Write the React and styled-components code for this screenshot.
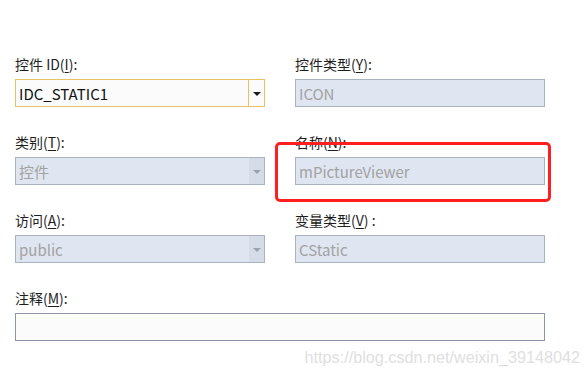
import React from "react";
import styled, { createGlobalStyle } from "styled-components";

const Global = createGlobalStyle`
  html, body { margin: 0; padding: 0; background: #ffffff; }
  body { font-family: "Noto Sans CJK SC", "Noto Sans", sans-serif; }
`;

const Page = styled.div`
  position: relative;
  width: 585px;
  height: 378px;
  box-sizing: border-box;
  padding: 54px 40px 0 15px;
  overflow: hidden;
`;

const Form = styled.div`
  display: grid;
  grid-template-columns: 250px 250px;
  column-gap: 30px;
  row-gap: 25px;
`;

const Field = styled.div`
  display: flex;
  flex-direction: column;
  grid-column: ${(p) => (p.$wide ? "1 / span 2" : "auto")};
`;

const Label = styled.label`
  font-size: 14px;
  line-height: 20px;
  height: 20px;
  margin-bottom: 5px;
  color: #1e1e1e;
  white-space: nowrap;
  u { text-decoration: underline; text-underline-offset: 2px; }
`;

const Box = styled.div`
  box-sizing: border-box;
  height: 28px;
  display: flex;
  align-items: stretch;
  border: 1px solid ${(p) => (p.$active ? "#e6c262" : p.$disabled ? "#a9b2bf" : "#8a94a6")};
  background: ${(p) => (p.$disabled ? "#dfe6f1" : "#fbfbfb")};
`;

const Value = styled.div`
  flex: 1;
  display: flex;
  align-items: center;
  padding-left: 3px;
  font-size: 15px;
  color: ${(p) => (p.$disabled ? "#a2a2a2" : "#111111")};
  white-space: nowrap;
`;

const DropButton = styled.div`
  width: 15px;
  display: flex;
  align-items: center;
  justify-content: center;
  border-left: ${(p) => (p.$active ? "1px solid #e6c262" : "none")};
  background: ${(p) => (p.$disabled ? "#d5dce8" : "transparent")};
`;

const Arrow = styled.span`
  width: 0;
  height: 0;
  border-left: 4px solid transparent;
  border-right: 4px solid transparent;
  border-top: 4px solid ${(p) => (p.$disabled ? "#9aa1ab" : "#1a1a1a")};
  margin-top: 1px;
`;

const Highlight = styled.div`
  position: absolute;
  left: 275px;
  top: 142px;
  width: 276px;
  height: 60px;
  box-sizing: border-box;
  border: 3px solid #ff1f1f;
  border-radius: 5px;
  pointer-events: none;
`;

const Watermark = styled.div`
  position: absolute;
  right: 5px;
  top: 348px;
  font-family: "Liberation Sans", Arial, sans-serif;
  font-size: 16.2px;
  color: #e0e0e0;
  white-space: nowrap;
`;

function Combo({ value, active, disabled }) {
  return (
    <Box $active={active} $disabled={disabled}>
      <Value $disabled={disabled}>{value}</Value>
      <DropButton $active={active} $disabled={disabled}>
        <Arrow $disabled={disabled} />
      </DropButton>
    </Box>
  );
}

function TextBox({ value, disabled }) {
  return (
    <Box $disabled={disabled}>
      <Value $disabled={disabled}>{value}</Value>
    </Box>
  );
}

export default function App() {
  return (
    <>
      <Global />
      <Page>
        <Form>
          <Field>
            <Label>控件 ID(<u>I</u>):</Label>
            <Combo value="IDC_STATIC1" active />
          </Field>
          <Field>
            <Label>控件类型(<u>Y</u>):</Label>
            <TextBox value="ICON" disabled />
          </Field>
          <Field>
            <Label>类别(<u>T</u>):</Label>
            <Combo value="控件" disabled />
          </Field>
          <Field>
            <Label>名称(<u>N</u>):</Label>
            <TextBox value="mPictureViewer" disabled />
          </Field>
          <Field>
            <Label>访问(<u>A</u>):</Label>
            <Combo value="public" disabled />
          </Field>
          <Field>
            <Label>变量类型(<u>V</u>) :</Label>
            <TextBox value="CStatic" disabled />
          </Field>
          <Field $wide>
            <Label>注释(<u>M</u>):</Label>
            <TextBox value="" />
          </Field>
        </Form>
        <Highlight />
        <Watermark>https://blog.csdn.net/weixin_39148042</Watermark>
      </Page>
    </>
  );
}
